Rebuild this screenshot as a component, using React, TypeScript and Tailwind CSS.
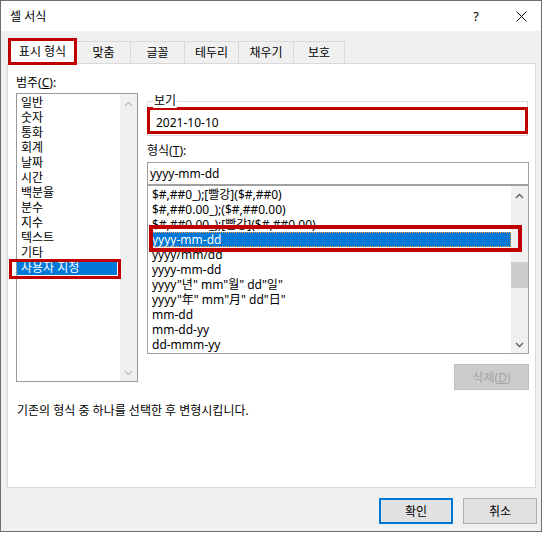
import React from "react";

const Chevron = ({ dir, color }: { dir: "up" | "down"; color: string }) => (
  <svg width="9" height="6" viewBox="0 0 9 6">
    <polyline
      points={dir === "up" ? "1,5 4.5,1.5 8,5" : "1,1 4.5,4.5 8,1"}
      fill="none"
      stroke={color}
      strokeWidth="1.4"
    />
  </svg>
);

const cats = ["일반", "숫자", "통화", "회계", "날짜", "시간", "백분율", "분수", "지수", "텍스트", "기타", "사용자 지정"];
const fmts = [
  "$#,##0_);[빨강]($#,##0)",
  "$#,##0.00_);($#,##0.00)",
  "$#,##0.00_);[빨강]($#,##0.00)",
  "yyyy-mm-dd",
  "yyyy/mm/dd",
  "yyyy-mm-dd",
  'yyyy"년" mm"월" dd"일"',
  'yyyy"年" mm"月" dd"日"',
  "mm-dd",
  "mm-dd-yy",
  "dd-mmm-yy",
];
const tabs = [
  { t: "맞춤", c: "w-[54px]" },
  { t: "글꼴", c: "w-[54px]" },
  { t: "테두리", c: "w-[54px]" },
  { t: "채우기", c: "w-[55px]" },
  { t: "보호", c: "w-[51px]" },
];

export default function App() {
  return (
    <div className="w-[545px] h-[533px] bg-white font-['Noto_Sans','Noto_Sans_CJK_KR',sans-serif] text-[12px] leading-[15px] text-black">
      <div className="w-[542px] h-[532px] border border-[#6e6e6e] flex flex-col bg-[#f0f0f0]">
        {/* title bar */}
        <div className="h-[30px] shrink-0 bg-white flex items-center">
          <span className="pl-[9px]">셀 서식</span>
          <div className="flex-1" />
          <div className="w-[30px] flex justify-center text-[13px]">?</div>
          <div className="w-[30px] ml-[15px] mr-[5px] flex justify-center">
            <svg width="11" height="11" viewBox="0 0 11 11">
              <path d="M0.5 0.5 L10.5 10.5 M10.5 0.5 L0.5 10.5" stroke="#000" strokeWidth="1" fill="none" />
            </svg>
          </div>
        </div>

        {/* tabs */}
        <div className="flex items-end pt-[7px] pl-[7px] shrink-0">
          <div className="relative z-10 h-[27px] w-[69px] -mb-[2px] bg-white border-[3px] border-[#c00000] flex items-center justify-center">
            표시 형식
          </div>
          {tabs.map((t) => (
            <div
              key={t.t}
              className={`${t.c} h-[22px] border-t border-r border-[#d9d9d9] flex items-center justify-center`}
            >
              {t.t}
            </div>
          ))}
        </div>

        {/* panel */}
        <div className="ml-[6px] w-[529px] h-[425px] shrink-0 bg-white border border-[#d9d9d9] flex flex-col">
          <div className="flex items-start pl-[8px] gap-[9px]">
            {/* left column */}
            <div className="w-[122px] mt-[11px] flex flex-col">
              <div className="h-[15px]">
                범주(<span className="underline">C</span>):
              </div>
              <div className="mt-[3px] h-[289px] border border-[#999999] flex">
                <div className="flex-1 pt-[1px] pr-[3px] flex flex-col">
                  {cats.map((c, i) =>
                    i === cats.length - 1 ? (
                      <div key={c} className="relative h-[15px] pl-[4px] bg-[#0078d7] text-white whitespace-nowrap">
                        {c}
                        <div className="absolute top-[-1px] bottom-[-4px] left-[-8px] right-[-4px] border-[3px] border-[#c00000]" />
                      </div>
                    ) : (
                      <div key={c} className="h-[15px] pl-[4px] whitespace-nowrap">
                        {c}
                      </div>
                    )
                  )}
                </div>
                <div className="w-[17px] bg-[#f0f0f0] flex flex-col justify-between">
                  <div className="h-[17px] pt-[2px] flex items-center justify-center">
                    <Chevron dir="up" color="#bfbfbf" />
                  </div>
                  <div className="h-[17px] flex items-center justify-center">
                    <Chevron dir="down" color="#bfbfbf" />
                  </div>
                </div>
              </div>
            </div>

            {/* right column */}
            <div className="w-[382px] flex flex-col">
              <div className="relative mt-[37px] w-[381px] h-[35px] border border-[#dcdcdc] pt-[5px]">
                <div className="-mx-px h-[27px] border-[3px] border-[#c00000] pl-[6px] pt-[5px]">2021-10-10</div>
                <span className="absolute left-[5px] top-[-9px] bg-white px-[1px]">보기</span>
              </div>
              <div className="mt-[7px] h-[15px]">
                형식(<span className="underline">T</span>):
              </div>
              <div className="mt-[4px] h-[23px] border border-[#a0a0a0] flex items-center pl-[2px]">yyyy-mm-dd</div>
              <div className="h-[169px] border border-[#a0a0a0] flex">
                <div className="flex-1 pt-[1px] flex flex-col">
                  {fmts.map((f, i) =>
                    i === 3 ? (
                      <div
                        key={i}
                        className="relative h-[15px] ml-[3px] pl-[1px] bg-[#0078d7] text-white whitespace-nowrap outline-1 outline-dotted outline-[#f5a04a] -outline-offset-1"
                      >
                        {f}
                        <div className="absolute top-[-7px] bottom-[-5px] left-[-2px] right-[-11px] border-[4px] border-[#c00000]" />
                      </div>
                    ) : (
                      <div key={i} className="h-[15px] ml-[3px] pl-[1px] whitespace-nowrap">
                        {f}
                      </div>
                    )
                  )}
                </div>
                <div className="w-[17px] bg-[#f0f0f0] flex flex-col">
                  <div className="h-[17px] pt-[2px] flex items-center justify-center">
                    <Chevron dir="up" color="#606060" />
                  </div>
                  <div className="mt-[59px] h-[26px] bg-[#cdcdcd]" />
                  <div className="flex-1" />
                  <div className="h-[17px] flex items-center justify-center">
                    <Chevron dir="down" color="#606060" />
                  </div>
                </div>
              </div>
              <div className="self-end mt-[10px] w-[75px] h-[26px] bg-[#cccccc] border border-[#bfbfbf] text-[#a3a3a3] flex items-center justify-center">
                삭제(<span className="underline">D</span>)
              </div>
            </div>
          </div>
          <div className="mt-[13px] pl-[9px] h-[15px]">기존의 형식 중 하나를 선택한 후 변형시킵니다.</div>
        </div>

        {/* buttons */}
        <div className="flex justify-end gap-[10px] mt-[10px] mr-[4px]">
          <div className="w-[74px] h-[26px] bg-[#e1e1e1] border-2 border-[#0078d7] flex items-center justify-center">확인</div>
          <div className="w-[74px] h-[26px] bg-[#e1e1e1] border border-[#adadad] flex items-center justify-center">취소</div>
        </div>
      </div>
    </div>
  );
}
